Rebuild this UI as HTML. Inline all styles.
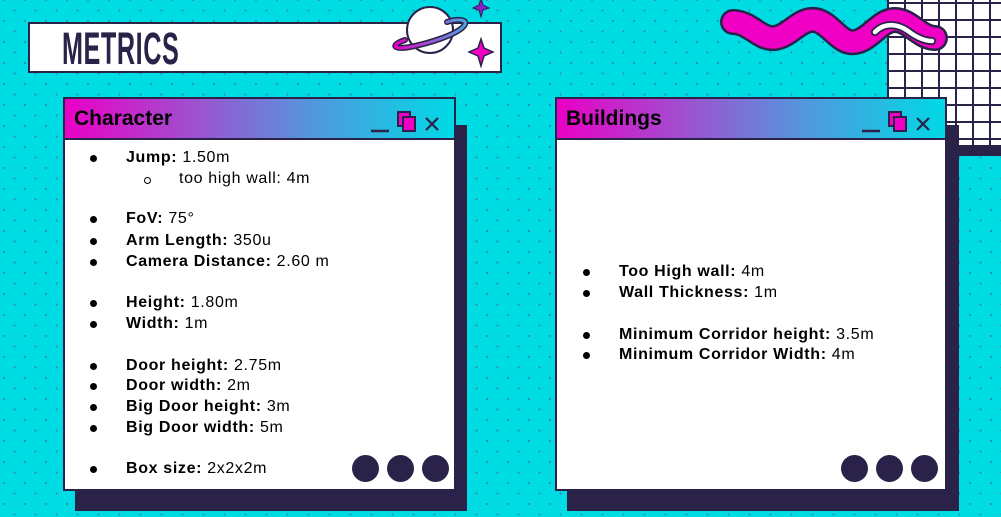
<!DOCTYPE html>
<html><head><style>
*{margin:0;padding:0;box-sizing:border-box}
body{width:1001px;height:517px;overflow:hidden;position:relative;background-color:#00dce4;
background-image:radial-gradient(circle,#2f8d9c 0.8px,transparent 1.2px),radial-gradient(circle,#2f8d9c 0.8px,transparent 1.2px);
background-size:21px 21px,21px 21px;background-position:4px 0px,14.5px 10.5px;
font-family:"Liberation Sans",Arial,sans-serif;color:#000}
.abs{position:absolute}
.title{left:28px;top:22px;width:474px;height:51px;background:#fff;border:2px solid #2a2249}
.title span{position:absolute;left:32px;top:-1px;font-size:45px;font-weight:bold;color:#2a2249;font-family:"Liberation Sans Narrow","Liberation Sans",sans-serif;transform:scaleX(0.56);transform-origin:left;letter-spacing:1px}
.shadow{background:#2a2249}
.win{background:#fff;border:2px solid #2a2249}
.hdr{position:absolute;left:0;top:0;right:0;height:41px;background:linear-gradient(90deg,#ea00c6,#9a55d0 35%,#4f9add 65%,#00d9e6);border-bottom:2px solid #2a2249}
.hdr b{position:absolute;left:9px;top:8px;font-size:21px}
.l{position:absolute;font-size:16px;line-height:18px;white-space:nowrap;letter-spacing:0.65px}
.d{position:absolute;width:7px;height:7px;border-radius:50%;background:#000}
.c{position:absolute;width:27px;height:27px;border-radius:50%;background:#2a2249}
</style></head><body>
<svg class="abs" style="left:0;top:0" width="1001" height="517">
 <rect x="888" y="0" width="113" height="150" fill="#fff"/>
 <g stroke="#2a2249" stroke-width="2">
  <line x1="888" y1="0" x2="888" y2="150"/><line x1="905" y1="0" x2="905" y2="150"/><line x1="922" y1="0" x2="922" y2="150"/><line x1="939" y1="0" x2="939" y2="150"/><line x1="956" y1="0" x2="956" y2="150"/><line x1="973" y1="0" x2="973" y2="150"/><line x1="990" y1="0" x2="990" y2="150"/>
  <line x1="888" y1="3" x2="1001" y2="3"/><line x1="888" y1="20" x2="1001" y2="20"/><line x1="888" y1="37" x2="1001" y2="37"/><line x1="888" y1="54" x2="1001" y2="54"/><line x1="888" y1="71" x2="1001" y2="71"/><line x1="888" y1="88" x2="1001" y2="88"/><line x1="888" y1="105" x2="1001" y2="105"/><line x1="888" y1="122" x2="1001" y2="122"/><line x1="888" y1="139" x2="1001" y2="139"/>
 </g>
 <rect x="946" y="145" width="55" height="11" fill="#2a2249"/>
 <path d="M733,22 C750,22 760,40 775,38 C790,36 800,18 815,20 C830,22 840,45 855,42 C870,40 880,20 895,20 C910,20 920,38 935,38" fill="none" stroke="#2a2249" stroke-width="26" stroke-linecap="round"/>
 <path d="M733,22 C750,22 760,40 775,38 C790,36 800,18 815,20 C830,22 840,45 855,42 C870,40 880,20 895,20 C910,20 920,38 935,38" fill="none" stroke="#f000c4" stroke-width="21" stroke-linecap="round"/>
 <path d="M875,32 C885,22 898,24 908,31 C916,37 924,41 932,41" fill="none" stroke="#2a2249" stroke-width="8" stroke-linecap="round"/>
 <path d="M875,32 C885,22 898,24 908,31 C916,37 924,41 932,41" fill="none" stroke="#fff" stroke-width="4.5" stroke-linecap="round"/>
</svg>
<div class="abs title"><span>METRICS</span></div>
<svg class="abs" style="left:385px;top:0" width="120" height="75">
 <defs><linearGradient id="g" x1="0" x2="1"><stop offset="0" stop-color="#ea00c6"/><stop offset="1" stop-color="#4aa6e0"/></linearGradient></defs>
 <circle cx="45" cy="30" r="23" fill="#fff" stroke="#2a2249" stroke-width="2"/>
 <path d="M20,40 C5,45 8,50 25,47 C45,43 70,35 78,27 C85,20 75,18 62,22" fill="none" stroke="#2a2249" stroke-width="6" stroke-linecap="round"/>
 <path d="M20,40 C5,45 8,50 25,47 C45,43 70,35 78,27 C85,20 75,18 62,22" fill="none" stroke="url(#g)" stroke-width="3" stroke-linecap="round"/>
 <path d="M96,-2 L98,5 L104,8 L98,10 L96,17 L94,10 L88,8 L94,5Z" fill="#8a1fd0" stroke="#2a2249" stroke-width="1"/>
 <path d="M96,39 L99,48 L108,52 L99,56 L96,66 L93,56 L84,52 L93,48Z" fill="#f000c4" stroke="#2a2249" stroke-width="1.5"/>
</svg>

<div class="abs shadow" style="left:75px;top:125px;width:392px;height:386px"></div>
<div class="abs win" style="left:63px;top:97px;width:393px;height:394px">
 <div class="hdr"><b>Character</b>
  <svg style="position:absolute;right:10px;top:10px" width="75" height="25"><line x1="2" y1="22" x2="20" y2="22" stroke="#2a2249" stroke-width="2.5"/><rect x="29" y="3" width="12" height="14" fill="#f000c4" stroke="#2a2249" stroke-width="2"/><rect x="34" y="8" width="12" height="14" fill="#f000c4" stroke="#2a2249" stroke-width="2"/><path d="M57,9 L69,21 M69,9 L57,21" stroke="#2a2249" stroke-width="2.2"/></svg>
 </div>
</div>
<div class="d" style="left:90px;top:155px"></div><div class="l" style="left:126px;top:149px"><b>Jump:</b> 1.50m</div>
<div class="abs" style="left:144px;top:177px;width:7px;height:7px;border:1px solid #000;border-radius:50%"></div><div class="l" style="left:179px;top:170px">too high wall: 4m</div>
<div class="d" style="left:90px;top:216px"></div><div class="l" style="left:126px;top:210px"><b>FoV:</b> 75°</div>
<div class="d" style="left:90px;top:238px"></div><div class="l" style="left:126px;top:232px"><b>Arm Length:</b> 350u</div>
<div class="d" style="left:90px;top:259px"></div><div class="l" style="left:126px;top:253px"><b>Camera Distance:</b> 2.60 m</div>
<div class="d" style="left:90px;top:300px"></div><div class="l" style="left:126px;top:294px"><b>Height:</b> 1.80m</div>
<div class="d" style="left:90px;top:321px"></div><div class="l" style="left:126px;top:315px"><b>Width:</b> 1m</div>
<div class="d" style="left:90px;top:363px"></div><div class="l" style="left:126px;top:357px"><b>Door height:</b> 2.75m</div>
<div class="d" style="left:90px;top:383px"></div><div class="l" style="left:126px;top:377px"><b>Door width:</b> 2m</div>
<div class="d" style="left:90px;top:404px"></div><div class="l" style="left:126px;top:398px"><b>Big Door height:</b> 3m</div>
<div class="d" style="left:90px;top:425px"></div><div class="l" style="left:126px;top:419px"><b>Big Door width:</b> 5m</div>
<div class="d" style="left:90px;top:466px"></div><div class="l" style="left:126px;top:460px"><b>Box size:</b> 2x2x2m</div>
<div class="c" style="left:352px;top:455px"></div><div class="c" style="left:387px;top:455px"></div><div class="c" style="left:422px;top:455px"></div>

<div class="abs shadow" style="left:567px;top:125px;width:392px;height:386px"></div>
<div class="abs win" style="left:555px;top:97px;width:392px;height:394px">
 <div class="hdr"><b>Buildings</b>
  <svg style="position:absolute;right:10px;top:10px" width="75" height="25"><line x1="2" y1="22" x2="20" y2="22" stroke="#2a2249" stroke-width="2.5"/><rect x="29" y="3" width="12" height="14" fill="#f000c4" stroke="#2a2249" stroke-width="2"/><rect x="34" y="8" width="12" height="14" fill="#f000c4" stroke="#2a2249" stroke-width="2"/><path d="M57,9 L69,21 M69,9 L57,21" stroke="#2a2249" stroke-width="2.2"/></svg>
 </div>
</div>
<div class="d" style="left:583px;top:269px"></div><div class="l" style="left:619px;top:263px"><b>Too High wall:</b> 4m</div>
<div class="d" style="left:583px;top:290px"></div><div class="l" style="left:619px;top:284px"><b>Wall Thickness:</b> 1m</div>
<div class="d" style="left:583px;top:332px"></div><div class="l" style="left:619px;top:326px"><b>Minimum Corridor height:</b> 3.5m</div>
<div class="d" style="left:583px;top:352px"></div><div class="l" style="left:619px;top:346px"><b>Minimum Corridor Width:</b> 4m</div>
<div class="c" style="left:841px;top:455px"></div><div class="c" style="left:876px;top:455px"></div><div class="c" style="left:911px;top:455px"></div>
</body></html>
